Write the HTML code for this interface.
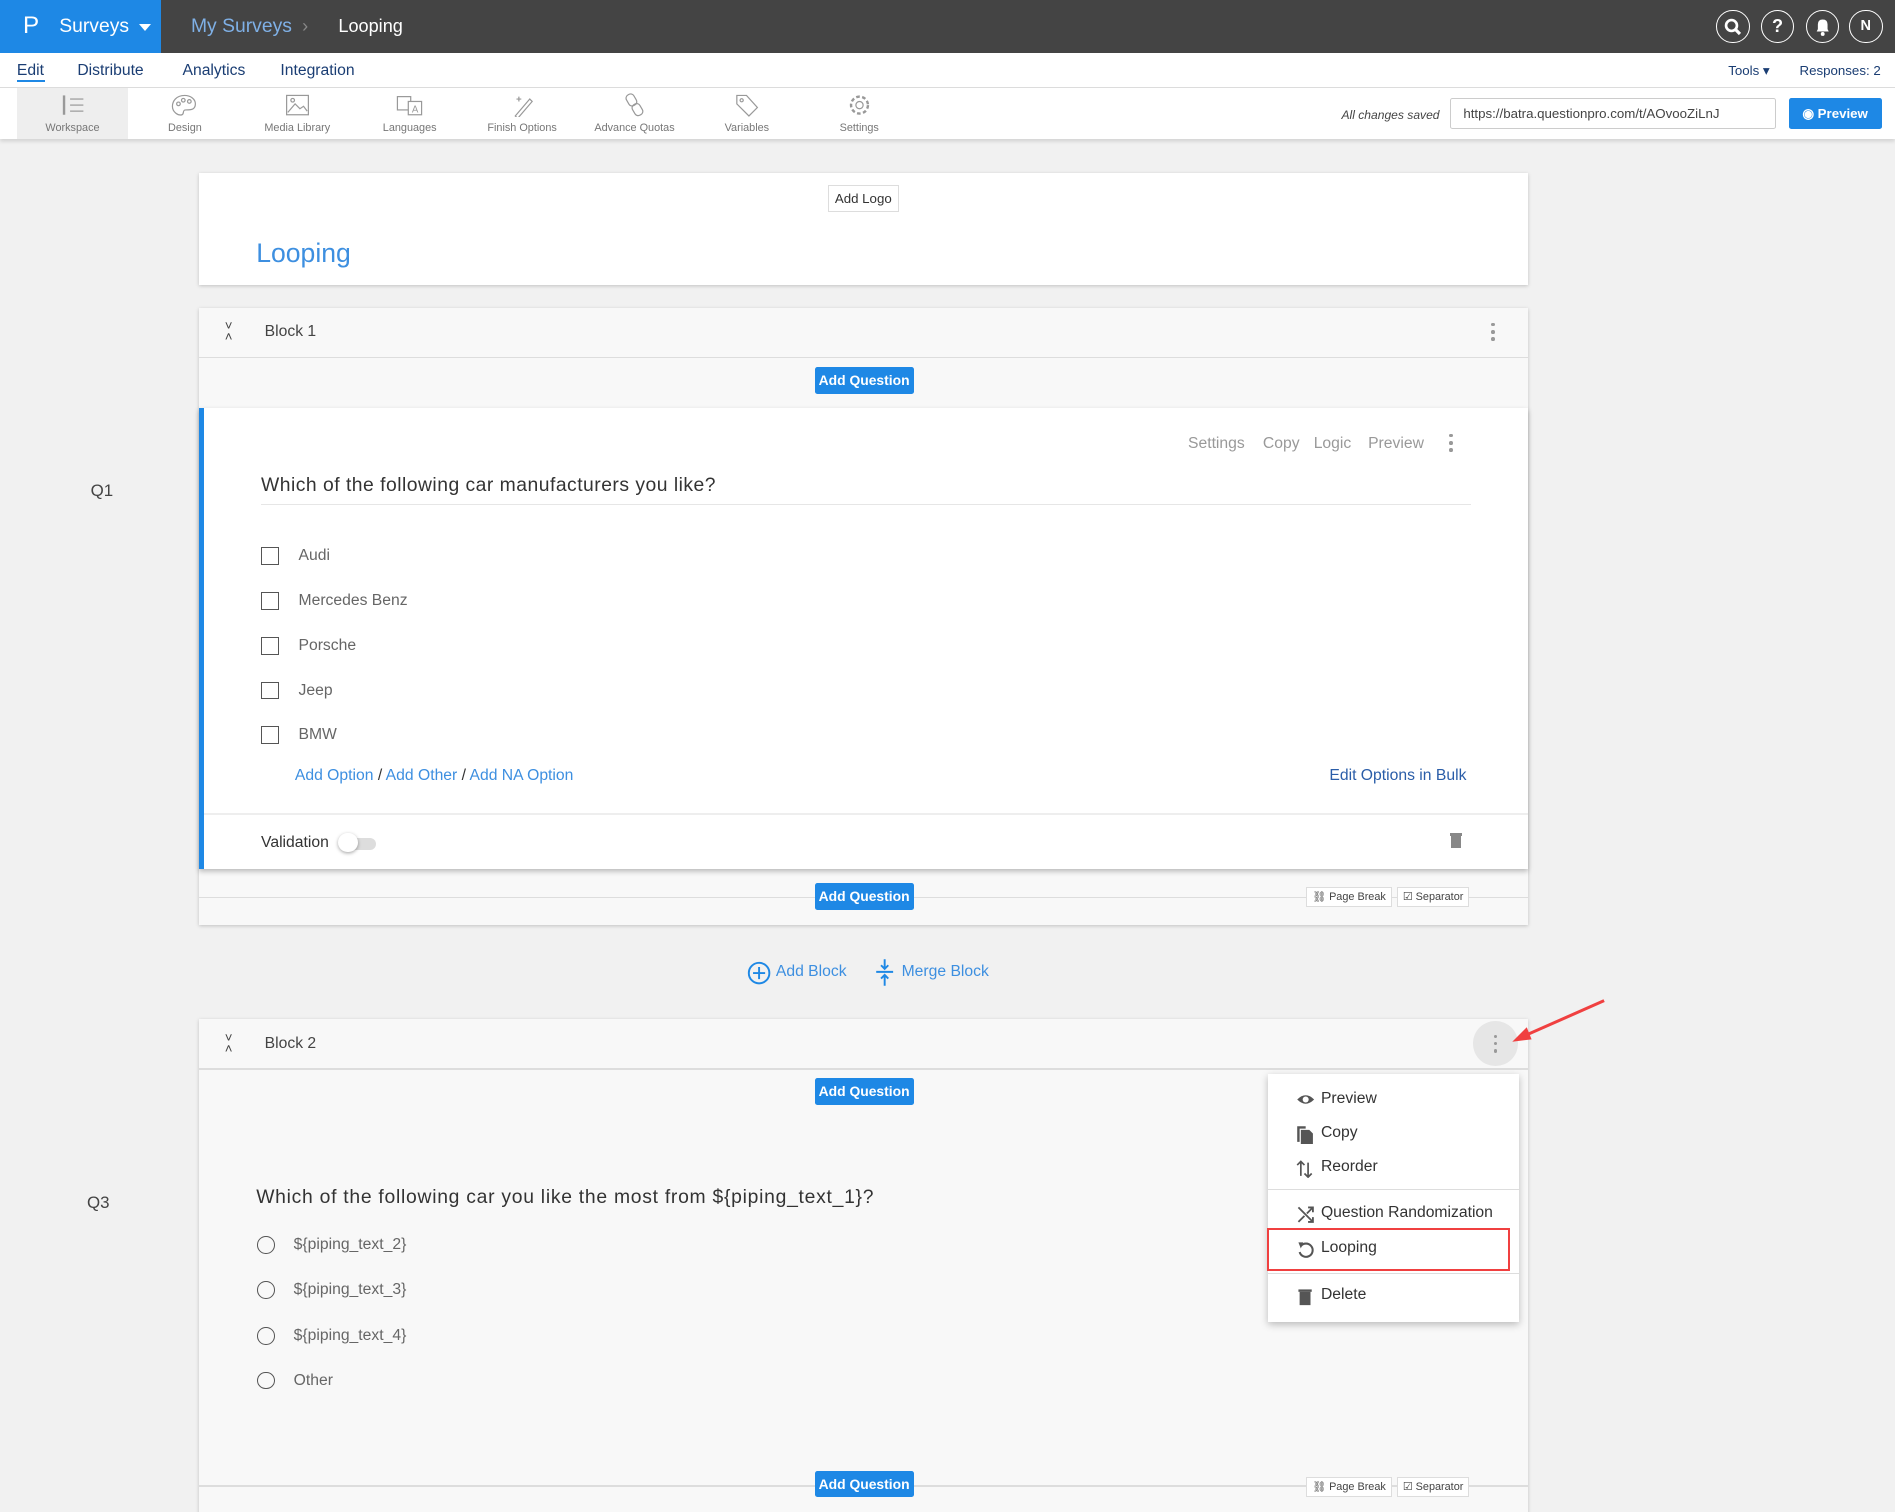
<!DOCTYPE html>
<html><head><meta charset="utf-8">
<style>
html,body{margin:0;padding:0;}
body{width:1895px;height:1512px;overflow:hidden;background:#f1f1f1;font-family:"Liberation Sans",sans-serif;}
#r{zoom:1.20855;position:relative;width:1568px;height:1251px;overflow:hidden;}
.a{position:absolute;}
.t{white-space:nowrap;}
.btn{position:absolute;background:#1e88e5;color:#fff;font-size:11.5px;font-weight:bold;border-radius:2px;text-align:center;line-height:22px;width:82px;height:22px;}
.chk{position:absolute;width:13px;height:13px;border:1px solid #555;}
.rad{position:absolute;width:13px;height:13px;border:1px solid #555;border-radius:50%;}
.opt{position:absolute;font-size:13px;color:#666;}
.tb{position:absolute;top:80px;width:92px;text-align:center;font-size:9px;color:#777;}
.tb svg{display:block;margin:0 auto 4px;}
.mi{position:absolute;left:1072px;font-size:13px;color:#333;}
.mi svg{position:absolute;left:0;top:1px;}
.mi span{position:absolute;left:21px;top:0;white-space:nowrap;}
.sbtn{position:absolute;height:15px;border:1px solid #ddd;background:#fff;font-size:9px;color:#444;line-height:15px;padding:0 4px;}
.dots{position:absolute;width:3px;}
.dots i{display:block;width:3px;height:3px;border-radius:50%;background:#999;margin-bottom:3px;}
</style></head><body><div id="r">

<div class="a" style="left:0;top:0;width:1568px;height:44px;background:#444;"></div>
<div class="a" style="left:0;top:0;width:133px;height:44px;background:#1e88e5;"></div>
<div class="a t" style="left:19px;top:10px;color:#fff;font-size:20px;">P</div>
<div class="a t" style="left:49px;top:13px;color:#fff;font-size:16px;">Surveys</div>
<div class="a" style="left:115px;top:20px;border-left:5px solid transparent;border-right:5px solid transparent;border-top:6px solid #fff;"></div>
<div class="a t" style="left:158px;top:13px;color:#7fb0e6;font-size:16px;">My Surveys</div>
<div class="a t" style="left:250px;top:13px;color:#888;font-size:15px;">›</div>
<div class="a t" style="left:280px;top:13px;color:#fff;font-size:15px;">Looping</div>
<div class="a" style="left:1420px;top:8px;width:26px;height:26px;border:1px solid #fff;border-radius:50%;"><svg width="26" height="26"><circle cx="12" cy="12" r="4.5" stroke="#fff" stroke-width="2.2" fill="none"/><line x1="15" y1="15" x2="19" y2="19" stroke="#fff" stroke-width="2.6"/></svg></div>
<div class="a" style="left:1457px;top:8px;width:26px;height:26px;border:1px solid #fff;border-radius:50%;color:#fff;font-weight:bold;font-size:15px;text-align:center;line-height:26px;">?</div>
<div class="a" style="left:1494px;top:8px;width:26px;height:26px;border:1px solid #fff;border-radius:50%;"><svg width="26" height="26"><path d="M8 17 L9 15 L9 11 Q9 7 13 7 Q17 7 17 11 L17 15 L18 17 Z" fill="#fff"/><circle cx="13" cy="19" r="1.6" fill="#fff"/></svg></div>
<div class="a" style="left:1530px;top:8px;width:26px;height:26px;border:1px solid #fff;border-radius:50%;color:#fff;font-weight:bold;font-size:12px;text-align:center;line-height:26px;">N</div>

<div class="a" style="left:0;top:44px;width:1568px;height:28px;background:#fff;border-bottom:1px solid #ddd;"></div>
<div class="a t" style="left:14px;top:51px;font-size:13px;color:#1a3d73;">Edit</div>
<div class="a" style="left:14px;top:66px;width:23px;height:2px;background:#1e88e5;"></div>
<div class="a t" style="left:64px;top:51px;font-size:13px;color:#1a3d73;">Distribute</div>
<div class="a t" style="left:151px;top:51px;font-size:13px;color:#1a3d73;">Analytics</div>
<div class="a t" style="left:232px;top:51px;font-size:13px;color:#1a3d73;">Integration</div>
<div class="a t" style="left:1430px;top:52px;font-size:11px;color:#1a3d73;">Tools ▾</div>
<div class="a t" style="left:1489px;top:52px;font-size:11px;color:#1a3d73;">Responses: 2</div>

<div class="a" style="left:0;top:73px;width:1568px;height:42px;background:#fff;box-shadow:0 2px 3px rgba(0,0,0,.12);"></div>
<div class="a" style="left:14px;top:73px;width:92px;height:42px;background:#eee;"></div>
<div class="tb" style="left:14px;top:77px;"><svg width="24" height="20"><line x1="5" y1="2" x2="5" y2="18" stroke="#999" stroke-width="2"/><line x1="10" y1="5" x2="21" y2="5" stroke="#999"/><line x1="10" y1="10" x2="21" y2="10" stroke="#999"/><line x1="10" y1="15" x2="21" y2="15" stroke="#999"/></svg>Workspace</div>
<div class="tb" style="left:107px;top:77px;"><svg width="24" height="20"><path d="M12 2 C5 2 2 7 2 11 C2 16 7 19 10 18 C12 17 10 14 13 14 C17 14 21 14 21 9 C21 5 17 2 12 2Z" fill="none" stroke="#999"/><circle cx="7" cy="9" r="1.5" fill="none" stroke="#999"/><circle cx="11" cy="6" r="1.5" fill="none" stroke="#999"/><circle cx="16" cy="7" r="1.5" fill="none" stroke="#999"/></svg>Design</div>
<div class="tb" style="left:200px;top:77px;"><svg width="24" height="20"><rect x="3" y="2" width="18" height="16" fill="none" stroke="#999"/><path d="M4 16 L10 9 L14 13 L17 11 L20 15" fill="none" stroke="#999"/><circle cx="8" cy="6" r="1.5" fill="none" stroke="#999"/></svg>Media Library</div>
<div class="tb" style="left:293px;top:77px;"><svg width="24" height="20"><rect x="2" y="3" width="11" height="11" fill="none" stroke="#999"/><rect x="11" y="7" width="11" height="11" fill="#fff" stroke="#999"/><text x="14" y="16" font-size="8" fill="#999" font-family="Liberation Sans">A</text></svg>Languages</div>
<div class="tb" style="left:386px;top:77px;"><svg width="24" height="20"><path d="M6 19 L18 5 L20 7 L8 21Z" fill="none" stroke="#999"/><path d="M9 3 L9 7 M7 5 L11 5" stroke="#999"/></svg>Finish Options</div>
<div class="tb" style="left:479px;top:77px;"><svg width="24" height="20"><rect x="6" y="1" width="7" height="10" rx="3" fill="none" stroke="#999" transform="rotate(-30 9 6)"/><rect x="11" y="9" width="7" height="10" rx="3" fill="none" stroke="#999" transform="rotate(-30 14 14)"/></svg>Advance Quotas</div>
<div class="tb" style="left:572px;top:77px;"><svg width="24" height="20"><path d="M4 2 L12 2 L21 12 L14 19 L4 9Z" fill="none" stroke="#999"/><circle cx="8" cy="6" r="1.3" fill="none" stroke="#999"/></svg>Variables</div>
<div class="tb" style="left:665px;top:77px;"><svg width="24" height="20"><circle cx="12" cy="10" r="7" fill="none" stroke="#999" stroke-width="2" stroke-dasharray="3 2"/><circle cx="12" cy="10" r="3" fill="none" stroke="#999"/></svg>Settings</div>
<div class="a t" style="left:1110px;top:89px;font-size:10px;font-style:italic;color:#444;">All changes saved</div>
<div class="a t" style="left:1200px;top:81px;width:258px;height:24px;border:1px solid #ccc;border-radius:2px;font-size:11px;color:#444;line-height:24px;padding-left:10px;">https://batra.questionpro.com/t/AOvooZiLnJ</div>
<div class="a t" style="left:1480px;top:81px;width:77px;height:26px;background:#1e88e5;border-radius:2px;color:#fff;font-size:11px;font-weight:bold;line-height:26px;text-align:center;">◉ Preview</div>

<div class="a" style="left:165px;top:143px;width:1099px;height:93px;background:#fff;box-shadow:0 1px 3px rgba(0,0,0,.2);"></div>
<div class="a t" style="left:685px;top:153px;width:57px;height:21px;border:1px solid #ddd;font-size:11px;color:#333;text-align:center;line-height:21px;">Add Logo</div>
<div class="a t" style="left:212px;top:197px;font-size:22px;color:#3d8fe0;">Looping</div>

<div class="a" style="left:165px;top:255px;width:1099px;height:510px;background:#f8f8f8;box-shadow:0 1px 3px rgba(0,0,0,.2);"></div>
<div class="a" style="left:165px;top:295px;width:1099px;height:1px;background:#ddd;"></div>
<div class="a t" style="left:186px;top:266px;font-size:11px;color:#444;line-height:9px;">˅<br>˄</div>
<div class="a t" style="left:219px;top:267px;font-size:13px;color:#444;">Block 1</div>
<div class="dots" style="left:1234px;top:267px;"><i></i><i></i><i></i></div>
<div class="btn" style="left:674px;top:304px;">Add Question</div>

<div class="a t" style="left:75px;top:398px;font-size:14px;color:#444;">Q1</div>
<div class="a" style="left:165px;top:338px;width:1099px;height:381px;background:#fff;box-shadow:0 2px 4px rgba(0,0,0,.25);"></div>
<div class="a" style="left:165px;top:338px;width:4px;height:381px;background:#1e88e5;"></div>
<div class="a t" style="left:983px;top:360px;font-size:13px;color:#999;">Settings</div>
<div class="a t" style="left:1045px;top:360px;font-size:13px;color:#999;">Copy</div>
<div class="a t" style="left:1087px;top:360px;font-size:13px;color:#999;">Logic</div>
<div class="a t" style="left:1132px;top:360px;font-size:13px;color:#999;">Preview</div>
<div class="dots" style="left:1199px;top:359px;"><i></i><i></i><i></i></div>
<div class="a t" style="left:216px;top:393px;font-size:16px;letter-spacing:0.4px;color:#333;">Which of the following car manufacturers you like?</div>
<div class="a" style="left:216px;top:417px;width:1001px;height:1px;background:#e6e6e6;"></div>
<div class="chk" style="left:216px;top:453px;"></div><div class="opt t" style="left:247px;top:453px;">Audi</div>
<div class="chk" style="left:216px;top:490px;"></div><div class="opt t" style="left:247px;top:490px;">Mercedes Benz</div>
<div class="chk" style="left:216px;top:527px;"></div><div class="opt t" style="left:247px;top:527px;">Porsche</div>
<div class="chk" style="left:216px;top:564px;"></div><div class="opt t" style="left:247px;top:564px;">Jeep</div>
<div class="chk" style="left:216px;top:601px;"></div><div class="opt t" style="left:247px;top:601px;">BMW</div>
<div class="a t" style="left:244px;top:635px;font-size:13px;color:#3d8fe0;">Add Option <span style="color:#333">/</span> Add Other <span style="color:#333">/</span> Add NA Option</div>
<div class="a t" style="left:1100px;top:635px;font-size:13px;color:#2a5da8;">Edit Options in Bulk</div>
<div class="a" style="left:169px;top:673px;width:1095px;height:1px;background:#eee;"></div>
<div class="a t" style="left:216px;top:690px;font-size:13px;color:#333;">Validation</div>
<div class="a" style="left:282px;top:693px;width:29px;height:10px;border-radius:5px;background:#ddd;"></div>
<div class="a" style="left:280px;top:689px;width:16px;height:16px;border-radius:50%;background:#fff;box-shadow:0 1px 3px rgba(0,0,0,.35);"></div>
<div class="a" style="left:1200px;top:689px;width:10px;height:3px;background:#888;"></div>
<div class="a" style="left:1201px;top:692px;width:8px;height:10px;background:#888;"></div>
<div class="a" style="left:165px;top:742px;width:1099px;height:1px;background:#ddd;"></div>
<div class="btn" style="left:674px;top:731px;">Add Question</div>
<div class="sbtn t" style="left:1081px;top:734px;">⛓ Page Break</div>
<div class="sbtn t" style="left:1156px;top:734px;">☑ Separator</div>

<svg class="a" style="left:618px;top:795px;" width="20" height="20"><circle cx="10" cy="10" r="8.5" fill="none" stroke="#1e88e5" stroke-width="1.6"/><path d="M10 5 V15 M5 10 H15" stroke="#1e88e5" stroke-width="1.6"/></svg>
<div class="a t" style="left:642px;top:797px;font-size:13px;color:#3d8fe0;">Add Block</div>
<svg class="a" style="left:724px;top:793px;" width="16" height="24"><path d="M8 1 V9 M5 6 L8 9 L11 6 M1 11.5 H15 M8 23 V14 M5 17 L8 14 L11 17" fill="none" stroke="#1e88e5" stroke-width="1.6"/></svg>
<div class="a t" style="left:746px;top:797px;font-size:13px;color:#3d8fe0;">Merge Block</div>

<div class="a" style="left:165px;top:843px;width:1099px;height:420px;background:#f8f8f8;box-shadow:0 1px 3px rgba(0,0,0,.2);"></div>
<div class="a" style="left:165px;top:884px;width:1099px;height:1px;background:#ddd;"></div>
<div class="a t" style="left:186px;top:855px;font-size:11px;color:#444;line-height:9px;">˅<br>˄</div>
<div class="a t" style="left:219px;top:856px;font-size:13px;color:#444;">Block 2</div>
<div class="a" style="left:1219px;top:845px;width:37px;height:37px;border-radius:50%;background:#e6e6e6;"></div>
<div class="dots" style="left:1236px;top:856px;"><i></i><i></i><i></i></div>
<div class="btn" style="left:674px;top:892px;">Add Question</div>
<div class="a t" style="left:72px;top:987px;font-size:14px;color:#444;">Q3</div>
<div class="a t" style="left:212px;top:982px;font-size:16px;letter-spacing:0.6px;color:#333;">Which of the following car you like the most from ${piping_text_1}?</div>
<div class="rad" style="left:213px;top:1023px;"></div><div class="opt t" style="left:243px;top:1023px;">${piping_text_2}</div>
<div class="rad" style="left:213px;top:1060px;"></div><div class="opt t" style="left:243px;top:1060px;">${piping_text_3}</div>
<div class="rad" style="left:213px;top:1098px;"></div><div class="opt t" style="left:243px;top:1098px;">${piping_text_4}</div>
<div class="rad" style="left:213px;top:1135px;"></div><div class="opt t" style="left:243px;top:1135px;">Other</div>
<div class="a" style="left:165px;top:1229px;width:1099px;height:1px;background:#ddd;"></div>
<div class="btn" style="left:674px;top:1217px;">Add Question</div>
<div class="sbtn t" style="left:1081px;top:1222px;">⛓ Page Break</div>
<div class="sbtn t" style="left:1156px;top:1222px;">☑ Separator</div>

<div class="a" style="left:1049px;top:889px;width:208px;height:205px;background:#fff;box-shadow:0 2px 6px rgba(0,0,0,.25);"></div>
<div class="mi" style="top:902px;"><svg width="16" height="14"><path d="M1 7 Q8 0 15 7 Q8 14 1 7Z" fill="#555"/><circle cx="8" cy="7" r="2.5" fill="#fff"/></svg><span>Preview</span></div>
<div class="mi" style="top:930px;"><svg width="16" height="16"><path d="M1 1 H8 V3 H3 V14 H1Z" fill="#555"/><path d="M4 4 H11 L14 7 V16 H4Z" fill="#555"/></svg><span>Copy</span></div>
<div class="mi" style="top:958px;"><svg width="16" height="16"><path d="M4 14 V2 M1 5 L4 2 L7 5 M10 3 V15 M7 12 L10 15 L13 12" fill="none" stroke="#555" stroke-width="1.4"/></svg><span>Reorder</span></div>
<div class="a" style="left:1049px;top:984px;width:208px;height:1px;background:#ddd;"></div>
<div class="mi" style="top:996px;"><svg width="16" height="16"><path d="M2 2 L14 14 M2 14 L7 9 M9 7 L14 2 M10 2 H14 V6 M10 14 H14 V10" fill="none" stroke="#555" stroke-width="1.5"/></svg><span>Question Randomization</span></div>
<div class="mi" style="top:1025px;"><svg width="16" height="16"><path d="M4 5 A5.5 5.5 0 1 1 3 10" fill="none" stroke="#555" stroke-width="1.7"/><path d="M2 2 L6 2 L4 7Z" fill="#555"/></svg><span>Looping</span></div>
<div class="a" style="left:1048px;top:1016px;width:198px;height:32px;border:2px solid #f04040;"></div>
<div class="a" style="left:1049px;top:1053px;width:208px;height:1px;background:#ddd;"></div>
<div class="mi" style="top:1064px;"><svg width="16" height="16"><rect x="2" y="2" width="11" height="2" fill="#555"/><rect x="3" y="4" width="9" height="11" fill="#555"/></svg><span>Delete</span></div>

<svg class="a" style="left:1245px;top:820px;" width="90" height="50"><line x1="82" y1="8" x2="14" y2="38" stroke="#f04040" stroke-width="2.5"/><path d="M6 42 L18 30 L22 40Z" fill="#f04040"/></svg>

</div></body></html>
